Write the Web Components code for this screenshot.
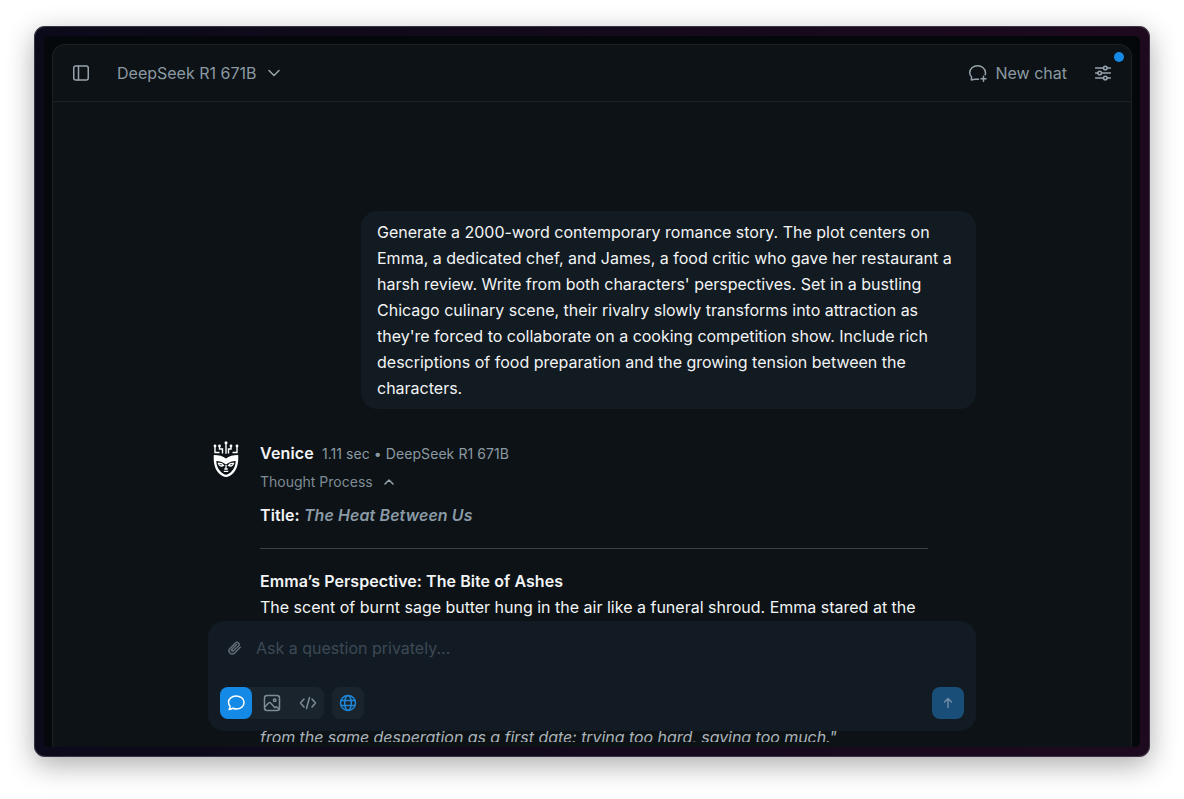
<!DOCTYPE html>
<html lang="en">
<head>
<meta charset="utf-8">
<title>Venice</title>
<style>
  html, body { margin: 0; height: 100%; background: #fff; }
  body { font-family: Inter, "Noto Sans", sans-serif; overflow: hidden; }
</style>
</head>
<body>
<device-frame>
  <app-header></app-header>
  <chat-thread>
    <user-message>Generate a 2000-word contemporary romance story. The plot centers on Emma, a dedicated chef, and James, a food critic who gave her restaurant a harsh review. Write from both characters' perspectives. Set in a bustling Chicago culinary scene, their rivalry slowly transforms into attraction as they're forced to collaborate on a cooking competition show. Include rich descriptions of food preparation and the growing tension between the characters.</user-message>
    <bot-message></bot-message>
  </chat-thread>
  <chat-composer slot="overlay"></chat-composer>
</device-frame>

<script>
class DeviceFrame extends HTMLElement {
  constructor() {
    super();
    this.shadowDOM = this.attachShadow({mode: 'open'});
    this.shadowDOM.innerHTML = `
      <style>
        :host { display: block; box-sizing: border-box; height: 799px; padding: 26px 34px 42px; }
        .bezel {
          box-sizing: border-box; height: 100%; padding: 10px;
          border-radius: 11px;
          background: linear-gradient(90deg, #0b0a1b 0%, #14091d 50%, #1e0a1e 100%);
          box-shadow: 0 0 0 1px rgba(90,90,100,.55) inset, 0 8px 28px rgba(0,0,0,.33);
        }
        .screen { box-sizing: border-box; height: 100%; padding: 8px 8px 0; background: #05080b; border-radius: 5px; }
        .app {
          position: relative; box-sizing: border-box; height: 100%; display: flex; flex-direction: column;
          overflow: hidden; background: #0c1215; padding-bottom: 5px;
          border: 1px solid #1a2125; border-bottom: 0; border-radius: 13px 13px 0 0;
        }
      </style>
      <div class="bezel"><div class="screen"><div class="app">
        <slot></slot>
        <slot name="overlay"></slot>
      </div></div></div>
    `;
  }
}
customElements.define('device-frame', DeviceFrame);

class AppHeader extends HTMLElement {
  connectedCallback() {
    this.shadowDOM = this.attachShadow({mode: 'open'});
    this.shadowDOM.innerHTML = `
      <style>
        :host { display: flex; flex: none; position: relative; box-sizing: border-box; height: 57px; align-items: center; padding: 0 20px; border-bottom: 1px solid #1a2226; color: #8b99a3; font-size: 16px; }
        svg { display: block; fill: none; stroke: #96a3ac; stroke-width: 1.5; stroke-linecap: round; stroke-linejoin: round; }
        .model { margin-left: 28px; display: flex; align-items: center; gap: 12px; }
        .right { margin-left: auto; display: flex; align-items: center; }
        .new { display: flex; align-items: center; gap: 7px; margin-right: 28px; }
        .dot { position: absolute; top: 7px; right: 7px; width: 10px; height: 10px; border-radius: 50%; background: #1589e6; }
      </style>
      <svg width="16" height="16" viewBox="0 0 16 16"><rect x=".75" y="1" width="14.5" height="14" rx="2"/><path d="M5.5 1v14"/></svg>
      <div class="model">DeepSeek R1 671B
        <svg width="12" height="8" viewBox="0 0 12 8"><path d="M1 1.5l5 5 5-5"/></svg>
      </div>
      <div class="right">
        <div class="new">
          <svg width="20" height="20" viewBox="0 0 20 20"><path d="M10.5 16.2c-1 .2-2 .2-3 0-.7-.1-3.500.9-4.200.7-.2 0 .5-2.600.2-3.100C2.200 12.700 1.700 11.300 1.700 9.800 1.700 5.800 5.200 2.800 9.500 2.800s8 3 8 7c0 .7-.1 1.300-.3 1.900"/><path d="M15.500 13.300v5M13 15.800h5"/></svg>
          New chat
        </div>
        <svg width="16" height="16" viewBox="0 0 16 16"><path d="M.5 3h8M12 3h3.500M.5 8h2.500M6.500 8h9M.5 13h8M12 13h3.500"/><circle cx="10.300" cy="3" r="1.800"/><circle cx="4.700" cy="8" r="1.800"/><circle cx="10.300" cy="13" r="1.800"/></svg>
      </div>
      <span class="dot"></span>
    `;
  }
}
customElements.define('app-header', AppHeader);

class ChatThread extends HTMLElement {
  constructor() {
    super();
    this.shadowDOM = this.attachShadow({mode: 'open'});
    this.shadowDOM.innerHTML = `
      <style>
        :host { display: block; flex: 1; min-height: 0; overflow: hidden; }
        .col { box-sizing: border-box; width: 768px; margin: 0 auto; padding-top: 109px; display: flex; flex-direction: column; }
      </style>
      <div class="col"><slot></slot></div>
    `;
  }
}
customElements.define('chat-thread', ChatThread);

class UserMessage extends HTMLElement {
  constructor() {
    super();
    this.shadowDOM = this.attachShadow({mode: 'open'});
    this.shadowDOM.innerHTML = `
      <style>
        :host { display: block; box-sizing: border-box; align-self: flex-end; width: 615px; padding: 8px 16px; border-radius: 16px; background: #121b22; color: #f2f4f5; font-size: 16px; line-height: 26px; }
      </style>
      <slot></slot>
    `;
  }
}
customElements.define('user-message', UserMessage);

class BotMessage extends HTMLElement {
  constructor() {
    super();
    this.shadowDOM = this.attachShadow({mode: 'open'});
    this.shadowDOM.innerHTML = `
      <style>
        :host { display: flex; margin-top: 30px; gap: 21px; padding-left: 5px; color: #f2f4f5; font-size: 16px; line-height: 26px; }
        .avatar { flex: none; width: 26px; padding-top: 2px; }
        .avatar svg { display: block; }
        .body { width: 668px; }
        .meta { display: flex; align-items: baseline; height: 26px; margin-top: 1px; }
        .name { font-weight: 600; letter-spacing: .01em; }
        .info { margin-left: 8px; font-size: 14px; color: #8b99a3; letter-spacing: .005em; }
        .thought { display: flex; align-items: center; gap: 11px; height: 26px; margin-top: 3px; font-size: 14px; color: #7f8c96; }
        .thought svg { fill: none; stroke: #96a3ac; stroke-width: 1.5; stroke-linecap: round; stroke-linejoin: round; }
        .title { margin-top: 7px; font-weight: 600; letter-spacing: .006em; }
        .title em { color: #8a9aa6; font-weight: 600; }
        hr { border: 0; border-top: 1px solid #39424a; margin: 20px 0 19px; }
        .head { font-weight: 600; letter-spacing: .004em; }
        .para { white-space: nowrap; }
        .quote { margin-top: 104px; font-style: italic; color: #aab3ba; letter-spacing: -.003em; }
      </style>
      <div class="avatar">
        <svg width="26" height="36" viewBox="0 0 26 36">
          <g fill="none" stroke="#fff" stroke-width="1.400">
            <path d="M2 5v6.500h4.500M6.500 5v3h3v4.500M13 1.700v11M18 5v3h-2.500v4.500M24 5v6.500h-4.500"/>
          </g>
          <g fill="#fff"><circle cx="2" cy="5" r="1.400"/><circle cx="6.500" cy="5" r="1.400"/><circle cx="13" cy="1.700" r="1.500"/><circle cx="18" cy="5" r="1.400"/><circle cx="24" cy="5" r="1.400"/></g>
          <path fill="#fff" fill-rule="evenodd" d="M.8 14C6 14 10 15 13 17.500C16 15 20 14 25.200 14C25.700 22 24.200 28 20.200 32.200C18 34.300 15 36 13 36C11 36 8 34.300 5.800 32.200C1.800 28 .3 22 .8 14ZM3.300 20C3.500 24 4.500 27.500 7.300 30.300C9.200 32.400 11.600 33.800 13 33.800C14.400 33.800 16.800 32.400 18.700 30.300C21.500 27.500 22.500 24 22.700 20C19.800 20 16 21 13 23.500C10 21 6.200 20 3.300 20Z"/>
          <g fill="none" stroke="#fff" stroke-width="1.300">
            <path d="M5.500 22.500C7.500 22 9.500 23 10.500 24.500C8.500 25.500 6.500 25 5.500 22.500ZM20.500 22.500C18.500 22 16.500 23 15.500 24.500C17.500 25.500 19.500 25 20.500 22.500Z"/>
            <path d="M13 24v3.500M11.300 28h3.400M10.800 30.300h4.400"/>
          </g>
        </svg>
      </div>
      <div class="body">
        <div class="meta"><span class="name">Venice</span><span class="info">1.11 sec &#8226; DeepSeek R1 671B</span></div>
        <div class="thought">Thought Process
          <svg width="10" height="6" viewBox="0 0 10 6"><path d="M1 5l4-4 4 4"/></svg>
        </div>
        <div class="title">Title: <em>The Heat Between Us</em></div>
        <hr>
        <div class="head">Emma’s Perspective: The Bite of Ashes</div>
        <div class="para">The scent of burnt sage butter hung in the air like a funeral shroud. Emma stared at the</div>
        <div class="quote">from the same desperation as a first date: trying too hard, saying too much."</div>
      </div>
    `;
  }
}
customElements.define('bot-message', BotMessage);

class ChatComposer extends HTMLElement {
  constructor() {
    super();
    this.shadowDOM = this.attachShadow({mode: 'open'});
    this.shadowDOM.innerHTML = `
      <style>
        :host { position: absolute; left: 155px; bottom: 16px; box-sizing: border-box; width: 768px; height: 110px; padding: 12px; border-radius: 16px; background: #121b24; display: flex; flex-direction: column; justify-content: space-between; }
        .ask { display: flex; align-items: center; gap: 14px; height: 30px; padding-left: 8px; font-size: 16px; color: #3d4954; }
        .tools { display: flex; align-items: center; }
        .group { display: flex; border-radius: 8px; background: #19242d; }
        .btn { width: 32px; height: 32px; border-radius: 8px; display: flex; align-items: center; justify-content: center; }
        .wide { width: 40px; }
        .active { background: #1589e6; }
        .web { margin-left: 8px; }
        .send { margin-left: auto; background: #184e78; }
        svg { display: block; fill: none; stroke: #7f8c96; stroke-width: 1.500; stroke-linecap: round; stroke-linejoin: round; }
      </style>
      <div class="ask">
        <svg width="14" height="14" viewBox="0 0 14 14" style="stroke:#5f6c76"><path d="M12.300 6.200l-5.400 5.500c-1.500 1.500-3.600 1.500-4.900.3-1.300-1.300-1.200-3.400.2-4.800l5-5c1-1 2.400-1 3.300-.2.900.9.800 2.300-.2 3.300L5.400 9.700c-.5.5-1.200.5-1.600.1-.4-.4-.4-1.100.1-1.600l4.700-4.700"/></svg>
        <span>Ask a question privately...</span>
      </div>
      <div class="tools">
        <div class="group">
          <div class="btn active"><svg width="18" height="18" viewBox="0 0 18 18" style="stroke:#fff"><path d="M9 2C4.900 2 1.500 4.800 1.500 8.300c0 1.500.6 2.800 1.600 3.900.2.800-.4 2.300-1 3.300 1.400 0 3-.6 3.900-1.300 1.200.5 2.600.8 4 .8 4.100 0 7-2.900 7-6.700S13.100 2 9 2z"/></svg></div>
          <div class="btn wide"><svg width="18" height="18" viewBox="0 0 18 18"><rect x="1.500" y="1.500" width="15" height="15" rx="2.500"/><circle cx="11.700" cy="6.200" r="1.300"/><path d="M1.800 13l4-4.200c.5-.5 1.100-.5 1.600 0l4.600 5 .7-.6c.5-.4 1.100-.4 1.500 0l2 2"/></svg></div>
          <div class="btn"><svg width="18" height="18" viewBox="0 0 18 18"><path d="M5 5L1.500 9 5 13M13 5l3.500 4-3.500 4M10.500 3.500l-3 11"/></svg></div>
        </div>
        <div class="group web">
          <div class="btn"><svg width="18" height="18" viewBox="0 0 18 18" style="stroke:#1f86d8"><circle cx="9" cy="9" r="7.500"/><ellipse cx="9" cy="9" rx="3.300" ry="7.500"/><path d="M2 6.500h14M2 11.500h14"/></svg></div>
        </div>
        <div class="btn send"><svg width="12" height="12" viewBox="0 0 12 12" style="stroke:#6f8ba3"><path d="M6 10.500v-9M2.500 5L6 1.500 9.500 5"/></svg></div>
      </div>
    `;
  }
}
customElements.define('chat-composer', ChatComposer);
</script>
</body>
</html>
